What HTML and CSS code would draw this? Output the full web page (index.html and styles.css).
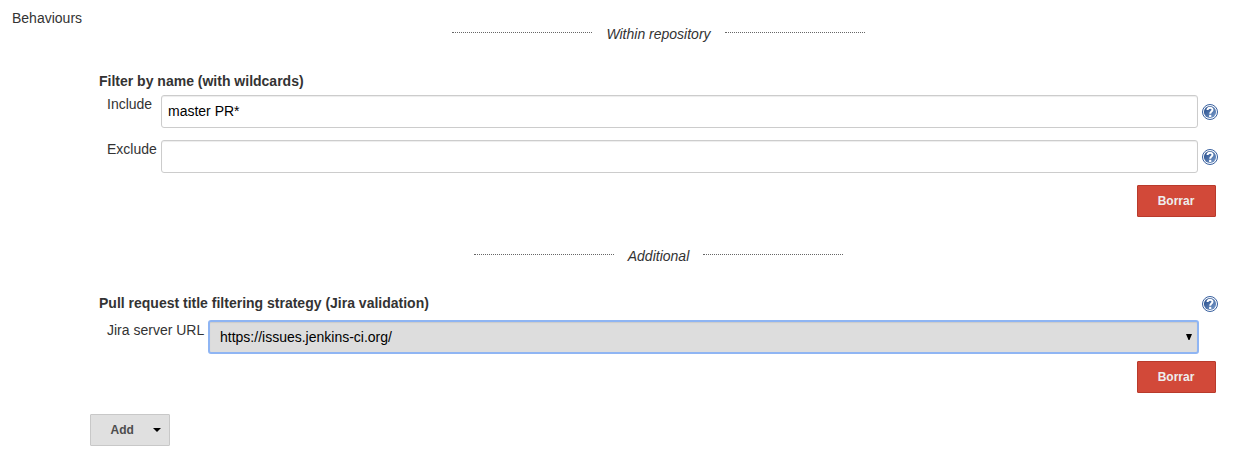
FILE: index.html
```html
<!DOCTYPE html>
<html lang="en">
<head>
<meta charset="utf-8">
<title>Behaviours</title>
<link rel="stylesheet" href="styles.css">
</head>
<body>
<svg class="defs" width="0" height="0" aria-hidden="true">
  <defs>
    <linearGradient id="disc" x1="0" y1="0" x2="1" y2="1">
      <stop offset="0" stop-color="#1f4686"/>
      <stop offset="1" stop-color="#7d9fcd"/>
    </linearGradient>
    <symbol id="help" viewBox="0 0 16 16">
      <circle cx="8" cy="8" r="7.5" fill="#fff" stroke="#38609f" stroke-width="1"/>
      <circle cx="8" cy="8" r="6.1" fill="url(#disc)"/>
      <path d="M5.5 6.1C5.5 2.9 10.5 2.9 10.5 5.8C10.5 7.6 8.2 7.6 8.2 9.8" fill="none" stroke="#fff" stroke-width="2"/>
      <path d="M7.1 10.8h2.2v2.2h-2.2z" fill="#fff"/>
    </symbol>
  </defs>
</svg>
<main class="page">
  <div class="title">Behaviours</div>
  <section class="behaviours">
    <div class="divider"><i class="rule"></i><span>Within repository</span><i class="rule"></i></div>
    <div class="block">
      <div class="heading">Filter by name (with wildcards)</div>
      <div class="row">
        <label class="label" for="inc">Include</label>
        <input class="field" id="inc" type="text" value="master PR*">
        <svg class="help"><use href="#help"/></svg>
      </div>
      <div class="row">
        <label class="label" for="exc">Exclude</label>
        <input class="field" id="exc" type="text">
        <svg class="help"><use href="#help"/></svg>
      </div>
      <div class="actions"><button class="delete">Borrar</button></div>
    </div>
    <div class="divider second"><i class="rule"></i><span>Additional</span><i class="rule"></i></div>
    <div class="block jira">
      <div class="heading">Pull request title filtering strategy (Jira validation)<svg class="help"><use href="#help"/></svg></div>
      <div class="row">
        <span class="label wide">Jira server URL</span>
        <div class="select"><span>https://issues.jenkins-ci.org/</span><svg class="arrow" viewBox="0 0 6 6"><path d="M0 0h6L3.5 6h-1z"/></svg></div>
      </div>
      <div class="actions"><button class="delete">Borrar</button></div>
    </div>
    <button class="add">Add<svg class="caret" viewBox="0 0 8 4"><path d="M0 0h8L4 4z"/></svg></button>
  </section>
</main>
</body>
</html>
```
FILE: styles.css
```css
* { box-sizing: border-box; }

body {
  margin: 0;
  background: #fff;
  color: #333;
  font: 14px/20px "Liberation Sans", Arial, sans-serif;
}

.defs { position: absolute; }

.page {
  display: grid;
  grid-template-columns: 78px 1128px;
  padding: 8px 0 0 12px;
}

.behaviours { padding-top: 16px; }

.divider {
  display: flex;
  justify-content: center;
  gap: 14px;
  width: 1137px;
  height: 20px;
  font-style: italic;
}

.rule {
  width: 140px;
  height: 1px;
  margin-top: 8px;
  border-top: 1px dotted #666;
}

.second { margin-top: 29px; }

.block { padding: 27px 0 0 9px; }

.heading {
  display: flex;
  justify-content: space-between;
  height: 20px;
  font-weight: bold;
}

.row {
  display: flex;
  align-items: flex-start;
  height: 33px;
  margin: 4px 0 12px;
}

.label {
  width: 62px;
  margin-top: -1px;
  padding-left: 8px;
  white-space: nowrap;
}

.field {
  width: 1037px;
  height: 33px;
  padding: 5px 6px 6px;
  border: 1px solid #ccc;
  border-radius: 3px;
  box-shadow: inset 0 1px 1px rgba(0, 0, 0, .075);
  color: #000;
  font: inherit;
}

.help {
  flex: none;
  width: 16px;
  height: 16px;
  margin: 9px 0 0 4px;
}

.actions {
  display: flex;
  justify-content: flex-end;
  padding-right: 2px;
}

.delete {
  width: 79px;
  height: 32px;
  padding: 0 1px 0 0;
  border: 1px solid #b93a2b;
  border-radius: 1px;
  background: #d24939;
  color: #eee;
  font: bold 12px/20px "Liberation Sans", Arial, sans-serif;
}

.jira .heading .help { margin-top: 3px; }

.jira .row {
  height: 34px;
  margin: 7px 0;
}

.wide {
  width: 109px;
  margin-top: 0;
}

.select {
  display: flex;
  align-items: center;
  justify-content: space-between;
  width: 991px;
  height: 34px;
  padding: 0 5px 0 10px;
  border: 2px solid #8fb5f3;
  border-radius: 3px;
  background: #ddd;
  box-shadow: inset 0 1px 1px rgba(0, 0, 0, .08);
  color: #000;
}

.arrow {
  width: 6px;
  height: 6px;
}

.add {
  display: flex;
  align-items: center;
  justify-content: space-between;
  width: 80px;
  height: 32px;
  margin-top: 21px;
  padding: 0 8.5px 0 19.5px;
  border: 1px solid #c8c8c8;
  border-radius: 1px;
  background: #e0e0e0;
  color: #4d4d4d;
  font: bold 12px/20px "Liberation Sans", Arial, sans-serif;
}

.caret {
  width: 8px;
  height: 4px;
}
```
